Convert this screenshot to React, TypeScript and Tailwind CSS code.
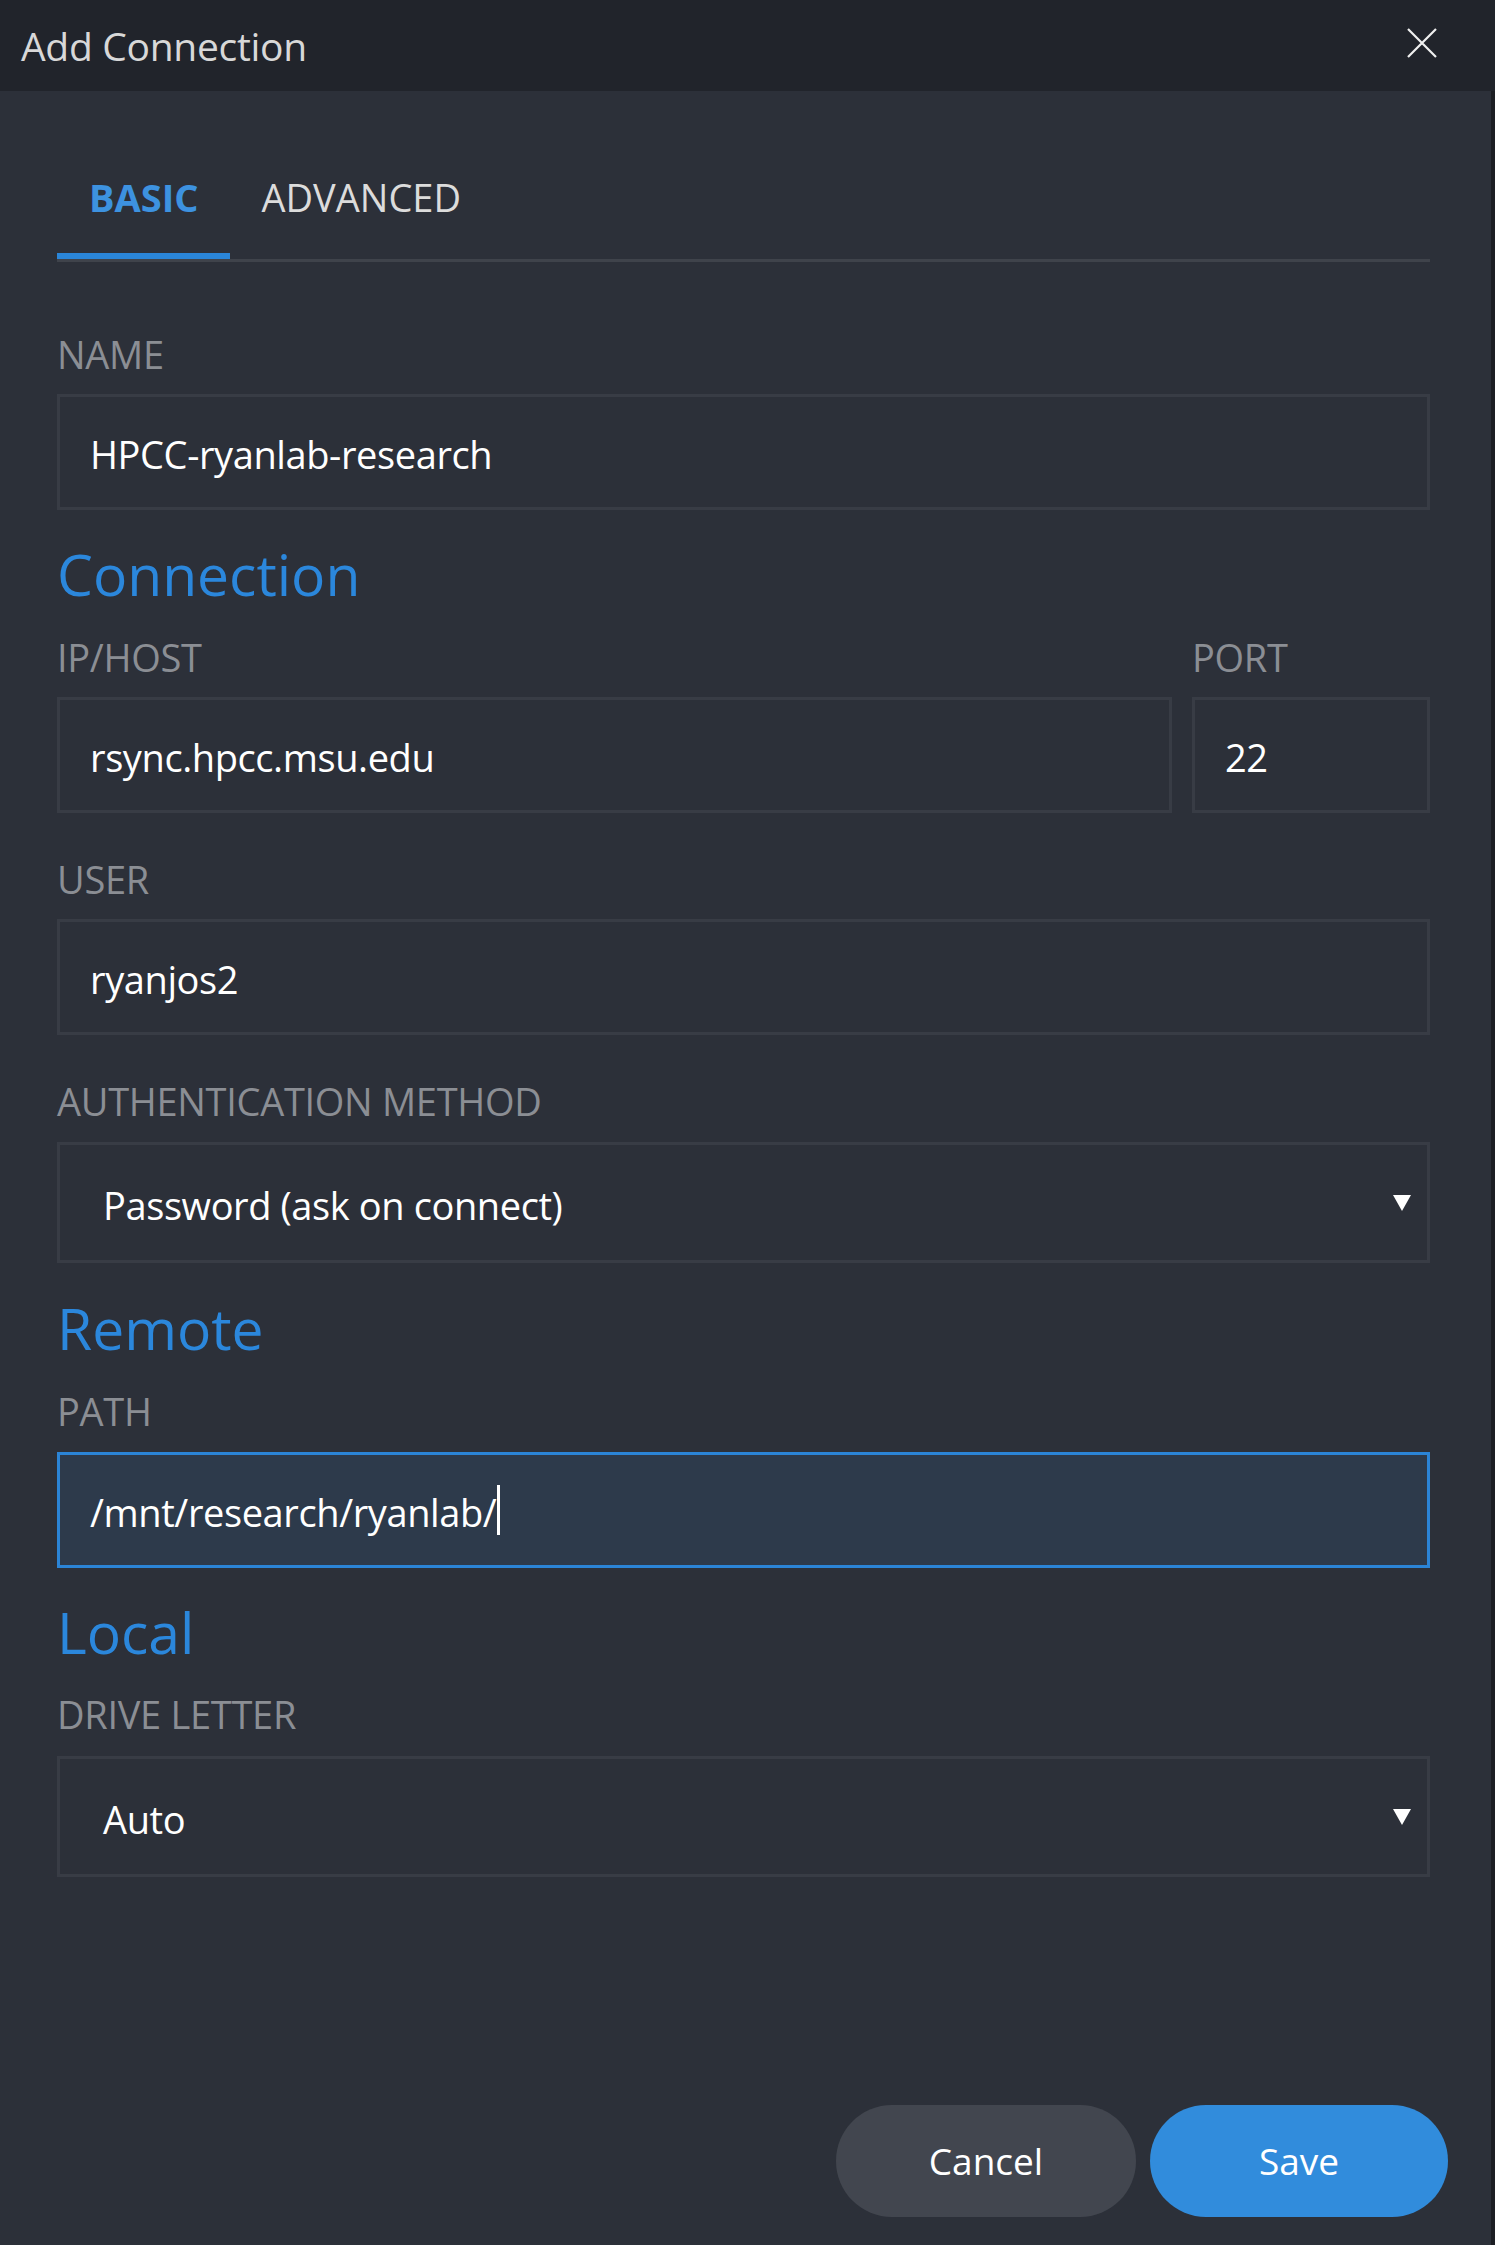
import { ReactNode } from "react";

const FONT = { fontFamily: '"Open Sans", "Noto Sans", sans-serif' };

function Label({ children }: { children: ReactNode }) {
  return (
    <div className="text-[38px] leading-[52px] tracking-[-0.3px] text-[#8b8e94]">{children}</div>
  );
}

function Heading({ children, className }: { children: ReactNode; className: string }) {
  return (
    <h2 className={`text-[57px] leading-[70px] text-[#2b87dc] ${className}`}>{children}</h2>
  );
}

function TextBox({ value }: { value: string }) {
  return (
    <div className="flex h-[116px] items-center border-[3px] border-[#383c45] pl-[30px] pt-[4px] text-[38px] tracking-[-0.4px] text-white">
      {value}
    </div>
  );
}

function SelectBox({ value }: { value: string }) {
  return (
    <div className="flex h-[121px] items-center justify-between border-[3px] border-[#383c45] pl-[43px] pr-[16px] text-[38px] tracking-[-0.4px] text-white">
      <span className="pt-[5px]">{value}</span>
      <svg width="18" height="16" viewBox="0 0 18 16">
        <path d="M0 0h18L9 16z" fill="#ffffff" />
      </svg>
    </div>
  );
}

export default function App() {
  return (
    <div className="flex min-h-[2245px] w-full flex-col bg-[#2c3039]" style={FONT}>
      <header className="flex h-[91px] items-center justify-between bg-[#21242b] pl-[21px] pr-[58px]">
        <span className="pt-[2px] text-[39px] tracking-[-0.3px] text-[#d8d8d8]">Add Connection</span>
        <svg width="30" height="30" viewBox="0 0 30 30" className="mb-[6px]">
          <path d="M1 1l28 28M29 1L1 29" stroke="#f0f0f0" strokeWidth="2.2" />
        </svg>
      </header>

      <div className="flex flex-1">
        <div className="flex flex-1 flex-col pl-[57px] pr-[43px]">
          <div className="mr-[18px] flex flex-col">
            <nav className="mt-[50px] flex border-b-[3px] border-[#3f434b]">
              <div className="flex h-[118px] items-center border-b-[6px] border-[#2a85d8] px-[32px] text-[38px] font-bold text-[#3d92e0]">
                BASIC
              </div>
              <div className="flex h-[118px] items-center border-b-[6px] border-transparent px-[31px] text-[38px] text-[#dcdcdc]">
                ADVANCED
              </div>
            </nav>

            <div className="mt-[66px]">
              <Label>NAME</Label>
              <div className="mt-[14px]">
                <TextBox value="HPCC-ryanlab-research" />
              </div>
            </div>

            <Heading className="mt-[29px]">Connection</Heading>

            <div className="mt-[22px] flex gap-[20px]">
              <div className="flex-1">
                <Label>IP/HOST</Label>
                <div className="mt-[14px]">
                  <TextBox value="rsync.hpcc.msu.edu" />
                </div>
              </div>
              <div className="w-[238px]">
                <Label>PORT</Label>
                <div className="mt-[14px]">
                  <TextBox value="22" />
                </div>
              </div>
            </div>

            <div className="mt-[40px]">
              <Label>USER</Label>
              <div className="mt-[14px]">
                <TextBox value="ryanjos2" />
              </div>
            </div>

            <div className="mt-[40px]">
              <Label>AUTHENTICATION METHOD</Label>
              <div className="mt-[15px]">
                <SelectBox value="Password (ask on connect)" />
              </div>
            </div>

            <Heading className="mt-[30px]">Remote</Heading>

            <div className="mt-[22px]">
              <Label>PATH</Label>
              <div className="mt-[15px] flex h-[116px] items-center border-[3px] border-[#2b84d6] bg-[#2d3a4b] pl-[30px] pt-[4px] text-[38px] tracking-[-0.4px] text-white">
                <span>/mnt/research/ryanlab/</span>
                <span className="ml-[1px] mb-[4px] h-[50px] w-[3px] bg-white" />
              </div>
            </div>

            <Heading className="mt-[29px]">Local</Heading>

            <div className="mt-[21px]">
              <Label>DRIVE LETTER</Label>
              <div className="mt-[16px]">
                <SelectBox value="Auto" />
              </div>
            </div>
          </div>

          <div className="mt-auto flex justify-end gap-[14px] pb-[28px]">
            <button className="h-[112px] w-[300px] rounded-full bg-[#42464f] text-[37px] text-white">
              Cancel
            </button>
            <button className="h-[112px] w-[298px] rounded-full bg-[#318cdc] text-[37px] text-white">
              Save
            </button>
          </div>
        </div>
        <div className="w-[4px] bg-[#1c1e23]" />
      </div>
    </div>
  );
}
